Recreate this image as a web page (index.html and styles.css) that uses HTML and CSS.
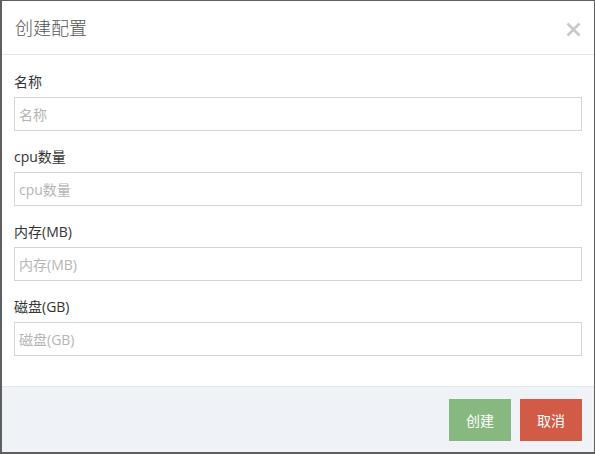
FILE: index.html
```html
<!DOCTYPE html>
<html lang="zh">
<head>
<meta charset="utf-8">
<title>创建配置</title>
<link rel="stylesheet" href="styles.css">
</head>
<body>
<div class="modal">
  <div class="modal-header">
    <h4 class="modal-title">创建配置</h4>
    <button class="close" type="button" aria-label="关闭">
      <svg width="15" height="15" viewBox="0 0 15 15"><path d="M1.5 1.5 L13.5 13.5 M13.5 1.5 L1.5 13.5" stroke="#c9c9c9" stroke-width="2.6" stroke-linecap="butt"/></svg>
    </button>
  </div>
  <div class="modal-body">
    <div class="form-group">
      <label class="label">名称</label>
      <input class="input" type="text" placeholder="名称">
    </div>
    <div class="form-group">
      <label class="label">cpu数量</label>
      <input class="input" type="text" placeholder="cpu数量">
    </div>
    <div class="form-group">
      <label class="label">内存(MB)</label>
      <input class="input" type="text" placeholder="内存(MB)">
    </div>
    <div class="form-group">
      <label class="label">磁盘(GB)</label>
      <input class="input" type="text" placeholder="磁盘(GB)">
    </div>
  </div>
  <div class="modal-footer">
    <button class="btn btn-success" type="button">创建</button>
    <button class="btn btn-danger" type="button">取消</button>
  </div>
</div>
</body>
</html>
```
FILE: styles.css
```css
html, body {
  margin: 0;
  padding: 0;
  background: #ffffff;
}
body {
  font-family: "Open Sans", "Noto Sans CJK SC", sans-serif;
  font-size: 14px;
  color: #333;
}
.modal {
  width: 595px;
  height: 454px;
  box-sizing: border-box;
  border: 1px solid #5f5f5f;
  border-left-width: 2px;
  border-bottom-width: 2px;
  background: #fff;
  display: flex;
  flex-direction: column;
}
.modal-header {
  height: 53px;
  border-bottom: 1px solid #e5e5e5;
  display: flex;
  align-items: center;
  justify-content: space-between;
  padding: 0 13px 0 13px;
  flex: none;
}
.modal-title {
  margin: 0;
  font-size: 18px;
  font-weight: 300;
  color: #555;
  line-height: 24px;
  padding-top: 1px;
}
.close {
  border: 0;
  background: none;
  padding: 0;
  margin: 0;
  width: 15px;
  height: 15px;
  display: flex;
  cursor: pointer;
  margin-top: 4px;
}
.modal-body {
  padding: 15px 12px 16px 12px;
  flex: none;
}
.form-group {
  margin-bottom: 14px;
}
.label {
  display: block;
  line-height: 20px;
  height: 20px;
  padding-top: 2px;
  margin-bottom: 5px;
  color: #333;
  font-size: 14px;
}
.input {
  display: block;
  box-sizing: border-box;
  width: 100%;
  height: 34px;
  margin: 0;
  padding: 0 4px;
  border: 1px solid #d5d5d5;
  background: #fff;
  font-family: "Open Sans", "Noto Sans CJK SC", sans-serif;
  font-size: 14px;
  color: #333;
  outline: none;
}
.input::placeholder {
  color: #b5b5b5;
}
.modal-footer {
  flex: 1;
  border-top: 1px solid #e4e9ee;
  background: #eff3f8;
  display: flex;
  justify-content: flex-end;
  align-items: flex-start;
  gap: 9px;
  padding: 12px 12px 0 12px;
}
.btn {
  width: 62px;
  height: 42px;
  border: 0;
  margin: 0;
  padding: 0;
  color: #fff;
  font-family: "Open Sans", "Noto Sans CJK SC", sans-serif;
  font-size: 14px;
  cursor: pointer;
}
.btn-success {
  background: #87b87f;
}
.btn-danger {
  background: #d15b47;
}
```
